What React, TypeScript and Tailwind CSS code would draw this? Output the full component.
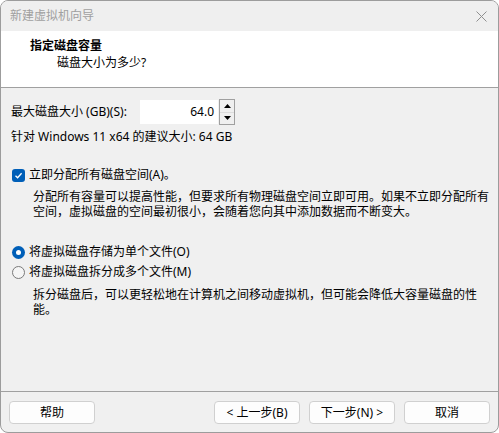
import React from 'react';

const font = { fontFamily: '"Segoe UI", "Noto Sans", "Noto Sans CJK SC", sans-serif' };

function WizardButton({ label }: { label: string }) {
  return (
    <button className="w-[86px] h-[23px] rounded-[4px] border border-[#d0d0d0] bg-[#fdfdfd] text-[12px] leading-none text-black">
      {label}
    </button>
  );
}

function Radio({ checked }: { checked: boolean }) {
  return checked ? (
    <span className="w-[13px] h-[13px] rounded-full bg-[#005fb8] flex items-center justify-center shrink-0">
      <span className="w-[5px] h-[5px] rounded-full bg-white" />
    </span>
  ) : (
    <span className="w-[13px] h-[13px] rounded-full border border-[#7a7a7a] bg-[#f5f5f5] shrink-0" />
  );
}

export default function App() {
  return (
    <div
      style={font}
      className="w-[499px] h-[433px] border border-[#9c9c9c] rounded-[8px] overflow-hidden bg-[#f0f0f0] flex flex-col text-[12px] text-black"
    >
      {/* title bar */}
      <div className="h-[30px] shrink-0 bg-[#efefef] flex items-center justify-between pl-[9px] pr-[10px]">
        <span className="text-[#a0a0a0] leading-none">新建虚拟机向导</span>
        <svg width="11" height="11" viewBox="0 0 11 11" className="mr-[1px]">
          <path d="M0.5 0.5 L10.5 10.5 M10.5 0.5 L0.5 10.5" stroke="#8f8f8f" strokeWidth="1" />
        </svg>
      </div>

      {/* header */}
      <div className="h-[57px] shrink-0 bg-white border-b border-[#a0a0a0] pl-[29px] pt-[7px]">
        <div className="font-bold leading-[16px]">指定磁盘容量</div>
        <div className="pl-[27px] leading-[16px] mt-[1px]">磁盘大小为多少?</div>
      </div>

      {/* body */}
      <div className="flex-1 pl-[10px] pr-[4px]">
        <div className="mt-[11px] h-[26px] flex items-center">
          <span className="w-[129px]">最大磁盘大小 (GB)(S):</span>
          <div className="w-[78px] h-[24px] bg-white flex items-center justify-end pr-[4px]">64.0</div>
          <div className="ml-[1px] w-[16px] h-[26px] border border-[#a0a0a0] bg-[#f0f0f0] flex flex-col">
            <div className="flex-1 flex items-center justify-center border-b border-[#dcdcdc]">
              <svg width="7" height="4" viewBox="0 0 7 4"><path d="M3.5 0 L7 4 L0 4 Z" fill="#000" /></svg>
            </div>
            <div className="flex-1 flex items-center justify-center">
              <svg width="7" height="4" viewBox="0 0 7 4"><path d="M0 0 L7 0 L3.5 4 Z" fill="#000" /></svg>
            </div>
          </div>
        </div>
        <div className="mt-[4px] leading-[16px]">针对 Windows 11 x64 的建议大小: 64 GB</div>

        <div className="mt-[22px] flex items-center gap-[4px] h-[16px]">
          <span className="ml-[1px] w-[13px] h-[13px] rounded-[3px] bg-[#005fb8] flex items-center justify-center shrink-0">
            <svg width="9" height="9" viewBox="0 0 9 9">
              <path d="M1.5 4.8 L3.6 6.8 L7.6 2.2" stroke="#fff" strokeWidth="1.3" fill="none" />
            </svg>
          </span>
          <span>立即分配所有磁盘空间(A)。</span>
        </div>
        <p className="mt-[6px] pl-[22px] leading-[15px]">
          分配所有容量可以提高性能，但要求所有物理磁盘空间立即可用。如果不立即分配所有空间，虚拟磁盘的空间最初很小，会随着您向其中添加数据而不断变大。
        </p>

        <div className="mt-[25px] flex items-center gap-[4px] h-[16px] pl-[1px]">
          <Radio checked />
          <span>将虚拟磁盘存储为单个文件(O)</span>
        </div>
        <div className="mt-[4px] flex items-center gap-[4px] h-[16px] pl-[1px]">
          <Radio checked={false} />
          <span>将虚拟磁盘拆分成多个文件(M)</span>
        </div>
        <p className="mt-[7px] pl-[22px] leading-[15px]">
          拆分磁盘后，可以更轻松地在计算机之间移动虚拟机，但可能会降低大容量磁盘的性能。
        </p>
      </div>

      {/* footer */}
      <div className="shrink-0 border-t border-[#a0a0a0] pt-[9px] pb-[8px] px-[8px] flex items-center">
        <WizardButton label="帮助" />
        <div className="flex-1" />
        <div className="flex gap-[9px]">
          <WizardButton label="< 上一步(B)" />
          <WizardButton label="下一步(N) >" />
          <WizardButton label="取消" />
        </div>
      </div>
    </div>
  );
}
